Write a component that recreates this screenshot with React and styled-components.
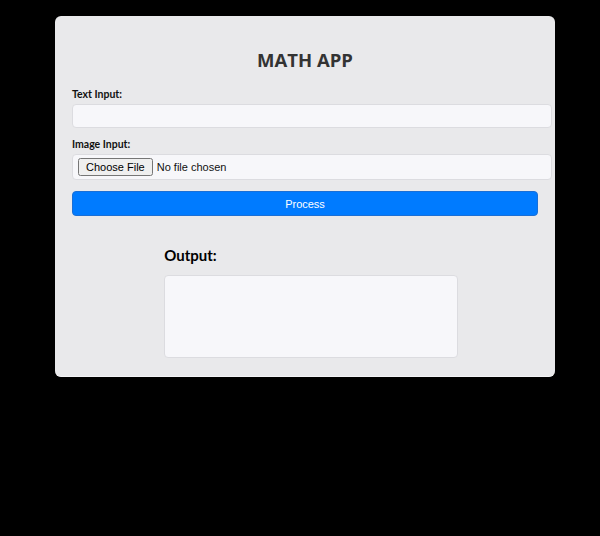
import React from "react";
import styled, { createGlobalStyle } from "styled-components";

const Global = createGlobalStyle`
  html, body { margin: 0; padding: 0; background: #000; }
  body { font-family: "Open Sans", "Noto Sans", sans-serif; }
  * { box-sizing: content-box; }
`;

const Page = styled.div`
  min-height: 536px;
  background: #000;
  padding-top: 16px;
  box-sizing: border-box;
`;

const Card = styled.div`
  width: 466px;
  margin: 0 0 0 55px;
  padding: 31px 17px 18px;
  background: #e9e9eb;
  border-radius: 6px;
  border-bottom: 1px solid #f4f4f6;
`;

const Title = styled.h1`
  margin: 0 0 14px;
  text-align: center;
  font-size: 18.5px;
  line-height: 26px;
  font-weight: 700;
  color: #333;
`;

const Label = styled.label`
  display: block;
  font-family: Lato, "Open Sans", sans-serif;
  font-size: 10.5px;
  line-height: 14px;
  font-weight: 700;
  color: #111;
  margin: ${(p) => (p.$first ? "0" : "9px")} 0 3px;
`;

const TextField = styled.input`
  display: block;
  width: 100%;
  height: 22px;
  padding: 0 6px;
  border: 1px solid #dcdce0;
  border-radius: 4px;
  background: #f7f7fa;
  outline: none;
`;

const FileBox = styled.div`
  width: calc(100% + 2px);
  height: 24px;
  padding: 0 5px;
  border: 1px solid #dcdce0;
  border-radius: 4px;
  background: #f7f7fa;
  display: flex;
  align-items: center;
  input {
    font-family: "Liberation Sans", Arial, sans-serif;
    font-size: 11px;
    color: #111;
  }
`;

const Button = styled.button`
  display: block;
  width: 100%;
  height: 25px;
  margin-top: 11px;
  box-sizing: border-box;
  border: 1px solid #1a6fd6;
  border-radius: 4px;
  background: #007bff;
  color: #fff;
  font-family: "Liberation Sans", Arial, sans-serif;
  font-size: 11px;
  cursor: pointer;
`;

const OutputSection = styled.div`
  width: 60%;
  margin: 29px auto 0;
`;

const OutputTitle = styled.h2`
  margin: 0 0 10px;
  margin-left: -1px;
  font-family: Lato, "Open Sans", sans-serif;
  font-size: 15px;
  line-height: 20px;
  font-weight: 700;
  color: #000;
`;

const OutputBox = styled.div`
  width: 100%;
  height: 81px;
  padding: 0 6px;
  margin-left: -1px;
  border: 1px solid #dcdce0;
  border-radius: 4px;
  background: #f7f7fa;
`;

export default function App() {
  return (
    <Page>
      <Global />
      <Card>
        <Title>MATH APP</Title>
        <Label $first htmlFor="txt">Text Input:</Label>
        <TextField id="txt" type="text" />
        <Label htmlFor="img">Image Input:</Label>
        <FileBox>
          <input id="img" type="file" />
        </FileBox>
        <Button>Process</Button>
        <OutputSection>
          <OutputTitle>Output:</OutputTitle>
          <OutputBox />
        </OutputSection>
      </Card>
    </Page>
  );
}
